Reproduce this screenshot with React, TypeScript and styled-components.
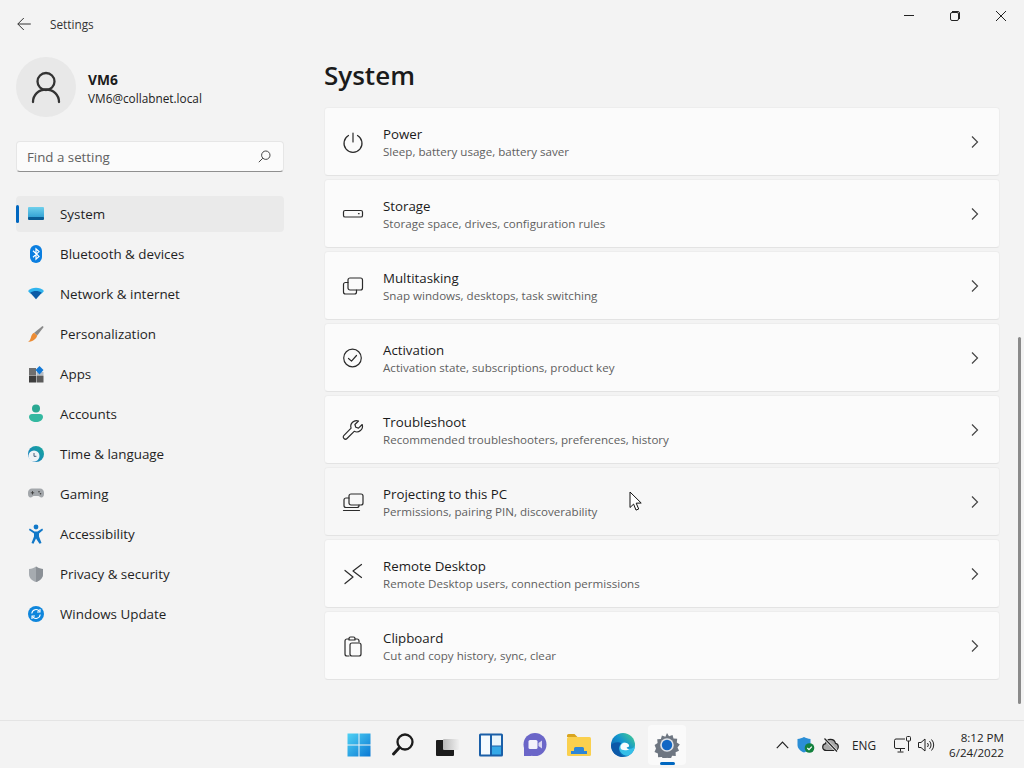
import React from "react";
import styled, { createGlobalStyle } from "styled-components";

const Global = createGlobalStyle`
  html, body { margin: 0; padding: 0; background: #f3f3f3; overflow: hidden; }
  * { box-sizing: border-box; }
`;

const Screen = styled.div`
  position: relative;
  width: 1024px;
  height: 768px;
  overflow: hidden;
  background: #f3f3f3;
  font-family: "Open Sans", "Noto Sans", sans-serif;
  color: #1b1b1b;
  display: flex;
  flex-direction: column;
`;
const Win = styled.div`
  height: 720px;
  display: grid;
  grid-template-columns: 324px 676px;
`;
const Sidebar = styled.aside`
  display: flex;
  flex-direction: column;
  padding: 0 0 0 16px;
`;
const TitleRow = styled.div`
  height: 48px;
  display: flex;
  align-items: center;
  gap: 19px;
  padding-left: 1px;
`;
const AppName = styled.span`
  font-size: 11.8px;
  color: #333;
`;
const Profile = styled.div`
  display: flex;
  align-items: center;
  gap: 12px;
  height: 60px;
  margin-top: 9px;
`;
const Avatar = styled.div`
  width: 60px;
  height: 60px;
  border-radius: 50%;
  background: #e8e8e8;
  display: flex;
  align-items: center;
  justify-content: center;
`;
const ProfileText = styled.div`
  display: flex;
  flex-direction: column;
  margin-top: 4px;
`;
const Name = styled.span`
  font-size: 13.8px;
  font-weight: 700;
  line-height: 18px;
`;
const Email = styled.span`
  font-size: 11.8px;
  line-height: 18px;
  color: #222;
`;
const Search = styled.div`
  margin-top: 24px;
  width: 268px;
  height: 31px;
  background: #fbfbfb;
  border: 1px solid #e6e6e6;
  border-bottom: 1px solid #8f8f8f;
  border-radius: 4px;
  display: flex;
  align-items: center;
  justify-content: space-between;
  padding: 0 12px 0 10px;
  font-size: 13.3px;
  color: #616161;
`;
const Nav = styled.nav`
  margin-top: 24px;
  display: flex;
  flex-direction: column;
  gap: 4px;
  width: 268px;
`;
const NavItem = styled.div<{ $active?: boolean }>`
  position: relative;
  height: 36px;
  border-radius: 4px;
  display: flex;
  align-items: center;
  gap: 16px;
  padding-left: 12px;
  font-size: 13.4px;
  color: #1f1f1f;
  background: ${(p) => (p.$active ? "#eaeaea" : "transparent")};
  ${(p) =>
    p.$active
      ? `&::before { content: ""; position: absolute; left: 0; top: 9px; width: 3px; height: 18px; border-radius: 2px; background: #0067c0; }`
      : ""}
`;
const Main = styled.main`
  display: flex;
  flex-direction: column;
`;
const H1 = styled.h1`
  margin: 0;
  height: 107px;
  padding-top: 55px;
  font-size: 26px;
  line-height: 40px;
  font-weight: 600;
  color: #1b1b1b;
`;
const Cards = styled.div`
  display: flex;
  flex-direction: column;
  gap: 3px;
`;
const Card = styled.div<{ $hover?: boolean }>`
  height: 69px;
  background: ${(p) => (p.$hover ? "#f7f7f7" : "#fbfbfb")};
  border: 1px solid #ededed;
  border-bottom-color: #e3e3e3;
  border-radius: 4px;
  display: grid;
  grid-template-columns: 58px 1fr 28px;
  align-items: center;
`;
const CardIcon = styled.div`
  display: flex;
  justify-content: center;
  padding-right: 2px;
`;
const CardText = styled.div`
  display: flex;
  flex-direction: column;
  padding-top: 2px;
`;
const CardTitle = styled.span`
  font-size: 13.3px;
  line-height: 18px;
  color: #1b1b1b;
`;
const CardSub = styled.span`
  font-size: 11.6px;
  line-height: 17px;
  color: #5f5f5f;
`;
const Chevron = styled.div`
  display: flex;
  justify-content: flex-start;
`;
const WinControls = styled.div`
  position: absolute;
  top: 0;
  right: 0;
  display: flex;
`;
const WinBtn = styled.div`
  width: 46px;
  height: 32px;
  display: flex;
  align-items: center;
  justify-content: center;
`;
const Scrollbar = styled.div`
  position: absolute;
  left: 1018px;
  top: 337px;
  width: 3px;
  height: 367px;
  border-radius: 2px;
  background: #8a8a8a;
`;
const Cursor = styled.svg`
  position: absolute;
  left: 629px;
  top: 491px;
`;
const Taskbar = styled.footer`
  height: 48px;
  background: #f3f3f3;
  border-top: 1px solid #e4e4e4;
  display: grid;
  grid-template-columns: 337px 352px 1fr;
  align-items: center;
`;
const Tasks = styled.div`
  grid-column: 2;
  display: grid;
  grid-template-columns: repeat(8, 44px);
  height: 40px;
`;
const Task = styled.div<{ $active?: boolean }>`
  position: relative;
  display: flex;
  align-items: center;
  justify-content: center;
  margin: 0 3px;
  border-radius: 4px;
  background: ${(p) => (p.$active ? "#fafafa" : "transparent")};
  ${(p) =>
    p.$active
      ? `&::after { content: ""; position: absolute; left: 12px; bottom: 0; width: 15px; height: 3px; border-radius: 2px; background: #0067c0; }`
      : ""}
`;
const Tray = styled.div`
  grid-column: 3;
  display: flex;
  align-items: center;
  height: 100%;
  padding-left: 81px;
`;
const TrayIcon = styled.div`
  width: 24px;
  display: flex;
  justify-content: center;
`;
const Lang = styled.span`
  width: 44px;
  margin-right: 4px;
  text-align: center;
  font-size: 11.8px;
  color: #222;
`;
const Clock = styled.div`
  margin-left: 2px;
  width: 64px;
  display: flex;
  flex-direction: column;
  align-items: flex-end;
  font-size: 11.6px;
  line-height: 15px;
  color: #222;
`;

const Stroke = ({ size = 24, children, sw = 1.2 }: { size?: number; sw?: number; children: React.ReactNode }) => (
  <svg width={size} height={size} viewBox="0 0 24 24" fill="none" stroke="#2b2b2b" strokeWidth={sw} strokeLinecap="round" strokeLinejoin="round">
    {children}
  </svg>
);

const Icons = {
  power: (
    <Stroke>
      <path d="M12 3v9" />
      <path d="M7.5 5.5a9 9 0 1 0 9 0" />
    </Stroke>
  ),
  storage: (
    <Stroke>
      <rect x="2.5" y="8.5" width="19" height="6.5" rx="1.6" />
      <path d="M17.5 11.7h.6" />
    </Stroke>
  ),
  multi: (
    <Stroke>
      <rect x="7" y="4" width="14.5" height="12" rx="2" />
      <path d="M7 8.5H4.5a2 2 0 0 0-2 2V18a2 2 0 0 0 2 2h9a2 2 0 0 0 2-2v-2" />
    </Stroke>
  ),
  check: (
    <Stroke>
      <circle cx="11.5" cy="12" r="8.8" />
      <path d="M7.5 12.5l3 2.6 5-5.6" />
    </Stroke>
  ),
  wrench: (
    <Stroke>
      <path d="M21.2 6.5l-3.7 3.6-2.7-.9-.9-2.7L17.5 3a5.7 5.7 0 0 0-7.4 7.2L3 17.4c-1 1-1 2.3 0 3.1.9.9 2.1.9 3 0l7.2-7.2a5.7 5.7 0 0 0 8-6.8z" />
    </Stroke>
  ),
  project: (
    <Stroke>
      <rect x="8" y="4" width="14" height="11" rx="2" />
      <path d="M8 8H5a2 2 0 0 0-2 2v5.500a2 2 0 0 0 2 2h11a2 2 0 0 0 2-2V15" />
      <path d="M2.500 20.500h16" />
    </Stroke>
  ),
  remote: (
    <Stroke>
      <path d="M20.500 2.500L12 9l8.500 6.500" />
      <path d="M4 8.500l8 6.500-8 6.500" />
    </Stroke>
  ),
  clip: (
    <Stroke>
      <path d="M8 5H6a2 2 0 0 0-2 2v13a2 2 0 0 0 2 2h2" />
      <path d="M8 4.5c0-1 .7-1.500 1.500-1.500h3c.8 0 1.500.5 1.500 1.500V6H8z" />
      <path d="M14 5h2a2 2 0 0 1 2 2v1" />
      <rect x="9" y="9" width="11" height="13" rx="2" />
    </Stroke>
  ),
};

const cards = [
  ["Power", "Sleep, battery usage, battery saver", Icons.power],
  ["Storage", "Storage space, drives, configuration rules", Icons.storage],
  ["Multitasking", "Snap windows, desktops, task switching", Icons.multi],
  ["Activation", "Activation state, subscriptions, product key", Icons.check],
  ["Troubleshoot", "Recommended troubleshooters, preferences, history", Icons.wrench],
  ["Projecting to this PC", "Permissions, pairing PIN, discoverability", Icons.project],
  ["Remote Desktop", "Remote Desktop users, connection permissions", Icons.remote],
  ["Clipboard", "Cut and copy history, sync, clear", Icons.clip],
] as const;

const Nv = ({ children }: { children: React.ReactNode }) => (
  <svg width="16" height="20" viewBox="0 0 16 20" style={{ flex: "none" }}>
    {children}
  </svg>
);

const navIcons = {
  system: (
    <Nv>
      <defs>
        <linearGradient id="sys" x1="0" y1="0" x2="0" y2="1">
          <stop offset="0" stopColor="#6fd0ec" />
          <stop offset="1" stopColor="#2a9ad0" />
        </linearGradient>
      </defs>
      <rect x="0" y="3" width="16" height="12" rx="1" fill="url(#sys)" />
      <rect x="0" y="13" width="16" height="3" rx="1" fill="#0a5c94" />
    </Nv>
  ),
  bt: (
    <Nv>
      <rect x="2" y="1" width="12" height="18" rx="6" fill="#0a7ee0" />
      <path d="M5 6.800l6 5.600-3 2.800V4.800l3 2.800-6 5.600" fill="none" stroke="#fff" strokeWidth="1.200" />
    </Nv>
  ),
  net: (
    <Nv>
      <path d="M0 7C4 2.600 12 2.600 16 7l-2.200 2.600H2.200z" fill="#30b4ee" />
      <path d="M2.200 8.800C5.500 6.500 10.500 6.500 13.800 8.800L8 15.300z" fill="#0b5aa6" />
    </Nv>
  ),
  brush: (
    <Nv>
      <path d="M14.500 2l1.200 1-6.500 8.600-3-2.800z" fill="#8a8a8a" />
      <path d="M6.200 8.800l3 2.800C8.300 15.500 3.500 18 0 18c1.900-1.500 2.600-3 3.100-5.300.4-1.700 1.700-3.500 3.100-3.900z" fill="#ec8c35" />
    </Nv>
  ),
  apps: (
    <Nv>
      <rect x="1" y="4" width="7" height="7" fill="#6f6f6f" />
      <rect x="1" y="11.500" width="7" height="7" fill="#3d3d3d" />
      <rect x="8.500" y="11.500" width="7" height="7" fill="#5b5b5b" />
      <rect x="8.500" y="8" width="7" height="3" fill="#b5bcc4" />
      <path d="M11.500 2l4 4-4 4.500-4-4.500z" fill="#1278d6" />
    </Nv>
  ),
  acc: (
    <Nv>
      <circle cx="8" cy="4.500" r="4" fill="#2aa892" />
      <path d="M1 13c0-2 1.300-3 3-3h8c1.700 0 3 1 3 3 0 3-3.500 5-7 5s-7-2-7-5z" fill="#33b8a0" />
    </Nv>
  ),
  time: (
    <Nv>
      <defs>
        <linearGradient id="tm" x1="1" y1="0" x2="0" y2="1">
          <stop offset="0" stopColor="#19a89a" />
          <stop offset="1" stopColor="#1478c8" />
        </linearGradient>
      </defs>
      <circle cx="8" cy="10" r="8" fill="url(#tm)" />
      <circle cx="6" cy="12" r="5.500" fill="#eef3f6" />
      <path d="M6 9v3.300h2.400" fill="none" stroke="#44607a" strokeWidth="1" />
    </Nv>
  ),
  game: (
    <Nv>
      <path d="M4 4.500h8c2.300 0 4 1.700 4 4.300V10c0 2.700-1.800 4.200-3.500 3.300L10.500 12h-5l-2 1.300C1.800 14.200 0 12.700 0 10V8.800c0-2.600 1.700-4.300 4-4.300z" fill="#a3a7ab" />
      <path d="M2.800 8.800h3.400M4.500 7.100v3.400" stroke="#3c3c3c" strokeWidth=".9" />
      <circle cx="11" cy="7.800" r=".8" fill="#3c3c3c" />
      <circle cx="12.500" cy="9.800" r=".8" fill="#3c3c3c" />
    </Nv>
  ),
  a11y: (
    <Nv>
      <circle cx="8" cy="3" r="2.400" fill="#1178c8" />
      <path d="M1.800 4.500L6.500 7.500h3l4.700-3 .9 1.400-4.100 3.500v3.100l2.500 6.500-2 .7L8 14.500l-2.500 5.200-2-.7L6 12.500V9.400L.9 5.900z" fill="#1178c8" />
    </Nv>
  ),
  shield: (
    <Nv>
      <path d="M8 2.500c2 1.500 4.300 2.300 7 2.400v5.100c0 4-3 6.700-7 8-4-1.300-7-4-7-8V4.900c2.700-.1 5-.9 7-2.400z" fill="#a6abb0" />
      <path d="M8 2.500c2 1.500 4.300 2.300 7 2.400v5.100c0 4-3 6.700-7 8z" fill="#8b9096" />
    </Nv>
  ),
  update: (
    <Nv>
      <circle cx="8" cy="10" r="8" fill="#0f86dc" />
      <path d="M3.800 9.500A4.300 4.300 0 0 1 11.500 7.300M12.200 10.500A4.300 4.300 0 0 1 4.500 12.700" fill="none" stroke="#fff" strokeWidth="1.100" />
      <path d="M12 5v3h-3M4 15v-3h3" fill="none" stroke="#fff" strokeWidth="1.100" />
    </Nv>
  ),
};

const nav = [
  ["System", navIcons.system],
  ["Bluetooth & devices", navIcons.bt],
  ["Network & internet", navIcons.net],
  ["Personalization", navIcons.brush],
  ["Apps", navIcons.apps],
  ["Accounts", navIcons.acc],
  ["Time & language", navIcons.time],
  ["Gaming", navIcons.game],
  ["Accessibility", navIcons.a11y],
  ["Privacy & security", navIcons.shield],
  ["Windows Update", navIcons.update],
] as const;

const T = ({ children }: { children: React.ReactNode }) => (
  <svg width="26" height="26" viewBox="0 0 26 26">
    {children}
  </svg>
);

const taskIcons = [
  <T key="win">
    <defs>
      <linearGradient id="w1" x1="0" y1="0" x2="1" y2="1">
        <stop offset="0" stopColor="#4fd2f4" />
        <stop offset="1" stopColor="#0a78d4" />
      </linearGradient>
    </defs>
    <path d="M1.500 1.500h11v11h-11zM13.500 1.500h11v11h-11zM1.500 13.500h11v11h-11zM13.500 13.500h11v11h-11z" fill="url(#w1)" />
  </T>,
  <T key="search">
    <circle cx="15" cy="10" r="7.500" fill="none" stroke="#1c1c1c" strokeWidth="2.300" />
    <path d="M9.500 15.500L3.500 22" stroke="#1c1c1c" strokeWidth="3" strokeLinecap="round" />
  </T>,
  <T key="tv">
    <defs>
      <linearGradient id="tv" x1="0" y1="0" x2="1" y2="0">
        <stop offset="0" stopColor="#b9b9b9" />
        <stop offset="1" stopColor="#f0f0f0" />
      </linearGradient>
    </defs>
    <rect x="2" y="8" width="18" height="16" rx="1" fill="#1c1c1c" />
    <rect x="9" y="7" width="16" height="11" rx="1" fill="url(#tv)" />
  </T>,
  <T key="wd">
    <rect x="1" y="1.500" width="24" height="23" rx="1.500" fill="#1a5fa8" />
    <rect x="3" y="3.500" width="9" height="19" fill="#f4fafe" />
    <rect x="14" y="3.500" width="9" height="10" fill="#e9f5fc" />
    <rect x="14" y="14.500" width="9" height="8" fill="#35a9e8" />
  </T>,
  <T key="chat">
    <circle cx="13" cy="12.500" r="11.500" fill="#6b66c8" />
    <path d="M2 13v11h8z" fill="#6b66c8" />
    <rect x="6.500" y="8" width="9" height="9" rx="1.500" fill="#f3f1fb" />
    <path d="M16.500 11l3.500-2.500v8L16.500 14z" fill="#d9d6f2" />
  </T>,
  <T key="folder">
    <path d="M1 3.500a1.500 1.500 0 0 1 1.500-1.500h6l3 3h-10.500z" fill="#d9a520" />
    <rect x="1" y="5" width="24" height="19" rx="1.500" fill="#fad04e" />
    <path d="M8 16.500a1.500 1.500 0 0 1 1.500-1.500h7a1.500 1.500 0 0 1 1.500 1.500V19H21v3H5v-3h3z" fill="#2d86d8" />
  </T>,
  <T key="edge">
    <defs>
      <linearGradient id="ed" x1="0" y1="1" x2="1" y2="0">
        <stop offset="0" stopColor="#0b4f9c" />
        <stop offset=".55" stopColor="#1293cf" />
        <stop offset="1" stopColor="#4ad48a" />
      </linearGradient>
    </defs>
    <circle cx="13" cy="13" r="12" fill="url(#ed)" />
    <path d="M25 13.500c-.3 2-2.700 3.200-5.300 3.200-1.800 0-3-.6-3-1.500 4-1 .2-5.700-3.700-4.700-3.700.9-5 5.500-2.700 9.300 1.600 2.700 5 4.200 7.500 4 4-1.500 7-5.500 7.200-10.300z" fill="#35bfe8" />
    <path d="M10.500 15.800c-.3-2.800 1.700-5 4.300-5 2.500 0 4.500 1.600 4.300 3.300-.1.900-.9 1.300-2.400 1.100 0 1.600 1.200 2 2.700 2-1.500 1.300-8.500 2-8.900-1.400z" fill="#f8fbfd" />
    <path d="M1 13c2-2 7-4 10.500-1.500-2.500 2-3.500 6-1.500 9.500 1 1.800 2 3 3.500 4C6 25 1 20 1 13z" fill="#0c59a8" />
  </T>,
  <T key="gear">
    <path d="M13 1l2 3.200 3.500-1.200 1 3.500 3.700.2-.4 3.700 3 2.100-2.300 2.900 1.500 3.400-3.400 1.500.2 3.700-3.700-.2-1.500 3.300-3.600-1.400-3 2.200-2.200-3-3.700.3-.2-3.700-3.400-1.500 1.500-3.400L.6 13l3-2.100-.4-3.700 3.700-.2 1-3.500 3.500 1.200z" fill="#6e7681" />
    <circle cx="13" cy="13" r="6.800" fill="#dfe3e8" />
    <circle cx="13" cy="13" r="5.200" fill="#1267c4" />
  </T>,
];

export default function App() {
  return (
    <Screen>
      <Global />
      <Win>
        <Sidebar>
          <TitleRow>
            <svg width="14" height="14" viewBox="0 0 14 14" fill="none" stroke="#333" strokeWidth="1">
              <path d="M.8 7h13M6.800 1L.8 7l6 6" />
            </svg>
            <AppName>Settings</AppName>
          </TitleRow>
          <Profile>
            <Avatar>
              <svg width="30" height="34" viewBox="0 0 30 34" fill="none" stroke="#333" strokeWidth="2.300" strokeLinecap="round">
                <circle cx="15" cy="11.500" r="8.500" />
                <path d="M2 32c0-7 5.500-12.500 13-12.500S28 25 28 32" />
              </svg>
            </Avatar>
            <ProfileText>
              <Name>VM6</Name>
              <Email>VM6@collabnet.local</Email>
            </ProfileText>
          </Profile>
          <Search>
            <span>Find a setting</span>
            <svg width="13" height="13" viewBox="0 0 13 13" fill="none" stroke="#444" strokeWidth="1">
              <circle cx="7.800" cy="5.200" r="4.200" />
              <path d="M4.800 8.200L.8 12.200" />
            </svg>
          </Search>
          <Nav>
            {nav.map(([label, icon], i) => (
              <NavItem key={label} $active={i === 0}>
                {icon}
                <span>{label}</span>
              </NavItem>
            ))}
          </Nav>
        </Sidebar>
        <Main>
          <H1>System</H1>
          <Cards>
            {cards.map(([title, sub, icon], i) => (
              <Card key={title} $hover={i === 5}>
                <CardIcon>{icon}</CardIcon>
                <CardText>
                  <CardTitle>{title}</CardTitle>
                  <CardSub>{sub}</CardSub>
                </CardText>
                <Chevron>
                  <svg width="8" height="14" viewBox="0 0 8 14" fill="none" stroke="#444" strokeWidth="1.200">
                    <path d="M1 1.500L6.500 7 1 12.500" />
                  </svg>
                </Chevron>
              </Card>
            ))}
          </Cards>
        </Main>
      </Win>
      <WinControls>
        <WinBtn>
          <svg width="10" height="10" viewBox="0 0 10 10" stroke="#222" strokeWidth="1">
            <path d="M0 4.500h10" />
          </svg>
        </WinBtn>
        <WinBtn>
          <svg width="10" height="10" viewBox="0 0 10 10" fill="none" stroke="#222" strokeWidth="1">
            <rect x=".5" y="1.500" width="8" height="8" rx="1.500" />
            <path d="M2 .5h6a1.500 1.500 0 0 1 1.500 1.500v6" />
          </svg>
        </WinBtn>
        <WinBtn>
          <svg width="10" height="10" viewBox="0 0 10 10" stroke="#222" strokeWidth="1">
            <path d="M0 0l10 10M10 0L0 10" />
          </svg>
        </WinBtn>
      </WinControls>
      <Scrollbar />
      <Cursor width="13" height="21" viewBox="0 0 13 21">
        <path d="M1 1v15.500l3.600-3.400 2.400 6 2.700-1.100-2.500-5.800 5-.2z" fill="#fff" stroke="#111" strokeWidth="1" strokeLinejoin="round" />
      </Cursor>
      <Taskbar>
        <Tasks>
          {taskIcons.map((icon, i) => (
            <Task key={i} $active={i === 7}>
              {icon}
            </Task>
          ))}
        </Tasks>
        <Tray>
          <TrayIcon>
            <svg width="13" height="8" viewBox="0 0 13 8" fill="none" stroke="#222" strokeWidth="1.200">
              <path d="M.8 7.200L6.500 1.200l5.700 6" />
            </svg>
          </TrayIcon>
          <TrayIcon>
            <svg width="18" height="16" viewBox="0 0 18 16">
              <path d="M7 0c2 1.200 4 1.800 6.500 2v6c0 3.500-3 6.300-6.500 7.500C3.500 14.300.5 11.500.5 8V2C3 1.800 5 1.200 7 0z" fill="#2b8ed6" />
              <circle cx="12.500" cy="11" r="4.800" fill="#13813d" />
              <path d="M10.300 11l1.700 1.700 2.800-3" fill="none" stroke="#fff" strokeWidth="1.200" />
            </svg>
          </TrayIcon>
          <TrayIcon>
            <svg width="17" height="14" viewBox="0 0 17 14" fill="none" stroke="#222" strokeWidth="1.200">
              <path d="M4.500 12.500C2 12.500.7 11 .7 9c0-1.800 1.300-3 2.800-3.300C4 3 6 1.300 8.500 1.300c2.500 0 4.500 1.700 5 4 1.700.2 2.800 1.700 2.800 3.400 0 1.800-1.300 3.800-3.800 3.800z" fill="#a8a8a8" />
              <path d="M2.500 .5l12.500 13" stroke="#f3f3f3" strokeWidth="2.600" />
              <path d="M2.500 .5l12.500 13" />
            </svg>
          </TrayIcon>
          <Lang>ENG</Lang>
          <TrayIcon>
            <svg width="17" height="17" viewBox="0 0 17 17" fill="none" stroke="#222" strokeWidth="1">
              <path d="M11 3H2a1.500 1.500 0 0 0-1.500 1.500v6.500A1.500 1.500 0 0 0 2 12.500h9" />
              <path d="M6.500 12.500v3M3.500 16h6" />
              <rect x="12.500" y=".5" width="4" height="4.500" rx="1" />
              <path d="M14.500 5v10" />
            </svg>
          </TrayIcon>
          <TrayIcon>
            <svg width="17" height="14" viewBox="0 0 17 14" fill="none" stroke="#222" strokeWidth="1">
              <path d="M.5 4.500h2.500L7 1v12L3 9.500H.5z" />
              <path d="M9.500 5a3 3 0 0 1 0 4M11.500 3.200a5.500 5.500 0 0 1 0 7.600M13.500 1.500a8 8 0 0 1 0 11" />
            </svg>
          </TrayIcon>
          <Clock>
            <span>8:12 PM</span>
            <span>6/24/2022</span>
          </Clock>
        </Tray>
      </Taskbar>
    </Screen>
  );
}
